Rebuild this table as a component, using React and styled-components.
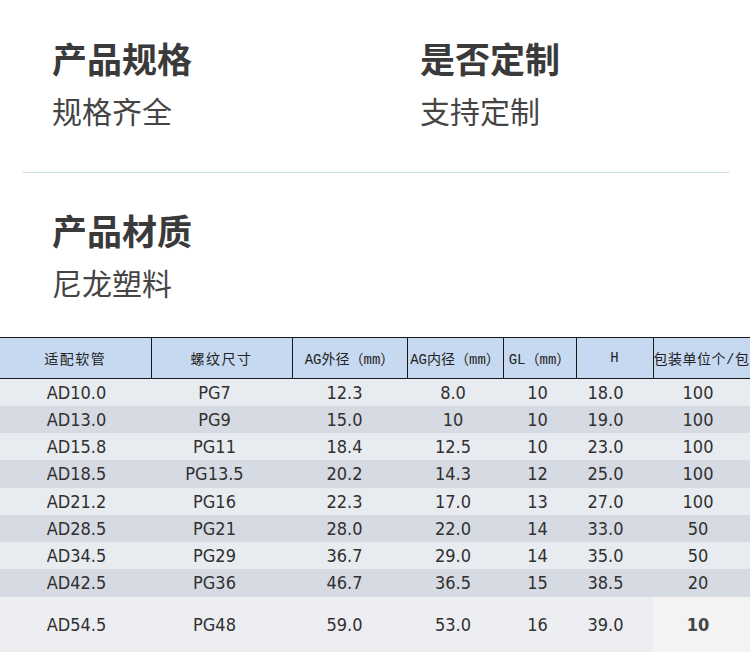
import styled, { createGlobalStyle } from "styled-components";

const GlobalStyle = createGlobalStyle`
  html, body {
    margin: 0;
    padding: 0;
    background: #fff;
    overflow: hidden;
  }
  body {
    font-family: "Noto Sans CJK SC", "Noto Sans", sans-serif;
  }
`;

const columns = [151, 141, 115, 96, 73, 77, 110];
const shifts = [-1, 7, 5, 2, 2, 9, 10];

const headers = [
    { text: "适配软管", spaced: true },
    { text: "螺纹尺寸", spaced: true },
    { text: "AG外径（mm）" },
    { text: "AG内径（mm）" },
    { text: "GL（mm）" },
    { text: "H" },
    { text: "包装单位个/包", last: true },
];

const rows = [
    ["AD10.0", "PG7", "12.3", "8.0", "10", "18.0", "100"],
    ["AD13.0", "PG9", "15.0", "10", "10", "19.0", "100"],
    ["AD15.8", "PG11", "18.4", "12.5", "10", "23.0", "100"],
    ["AD18.5", "PG13.5", "20.2", "14.3", "12", "25.0", "100"],
    ["AD21.2", "PG16", "22.3", "17.0", "13", "27.0", "100"],
    ["AD28.5", "PG21", "28.0", "22.0", "14", "33.0", "50"],
    ["AD34.5", "PG29", "36.7", "29.0", "14", "35.0", "50"],
    ["AD42.5", "PG36", "46.7", "36.5", "15", "38.5", "20"],
    ["AD54.5", "PG48", "59.0", "53.0", "16", "39.0", "10"],
];

export default function App() {
    return (
        <Page>
            <GlobalStyle />
            <SpecGrid>
                <Spec>
                    <SpecTitle>产品规格</SpecTitle>
                    <SpecValue>规格齐全</SpecValue>
                </Spec>
                <Spec>
                    <SpecTitle>是否定制</SpecTitle>
                    <SpecValue>支持定制</SpecValue>
                </Spec>
            </SpecGrid>
            <Divider />
            <SpecGrid $second>
                <Spec>
                    <SpecTitle>产品材质</SpecTitle>
                    <SpecValue>尼龙塑料</SpecValue>
                </Spec>
            </SpecGrid>

            <TableWrap>
                <Table>
                    <colgroup>
                        {columns.map((w, i) => <col key={i} style={{ width: w }} />)}
                    </colgroup>
                    <thead>
                        <tr>
                            {headers.map((h, i) => (
                                <HeadCell key={i} $last={h.last} $spaced={h.spaced}>{h.text}</HeadCell>
                            ))}
                        </tr>
                    </thead>
                    <tbody>
                        {rows.map((r, ri) => {
                            const isLast = ri === rows.length - 1;
                            return (
                                <Row key={ri} $dark={ri % 2 === 1} $tall={isLast}>
                                    {r.map((v, ci) => (
                                        <Cell
                                            key={ci}
                                            $shift={shifts[ci]}
                                            $soft={isLast && ci === r.length - 1}
                                        >
                                            {v}
                                        </Cell>
                                    ))}
                                </Row>
                            );
                        })}
                    </tbody>
                </Table>
            </TableWrap>
        </Page>
    );
}

const Page = styled.div`
    width: 750px;
    height: 654px;
    overflow: hidden;
    background: #fff;
    padding-top: 36px;
    box-sizing: border-box;
`;

const SpecGrid = styled.div`
    display: grid;
    grid-template-columns: 368px auto;
    padding-left: 52px;
    margin-top: ${p => p.$second ? '35px' : '0'};
`;

const Spec = styled.div`
    display: flex;
    flex-direction: column;
    gap: 11px;
`;

const SpecTitle = styled.div`
    font-size: 35px;
    line-height: 44px;
    font-weight: 700;
    color: #3a3a3a;
`;

const SpecValue = styled.div`
    font-size: 30px;
    line-height: 38px;
    color: #454545;
`;

const Divider = styled.div`
    height: 1px;
    background: #cfe4e4;
    margin: 43px 20px 0 22px;
`;

const TableWrap = styled.div`
    margin-top: 36px;
    width: 750px;
    overflow: hidden;
`;

const Table = styled.table`
    border-collapse: collapse;
    table-layout: fixed;
    width: 763px;
`;

const HeadCell = styled.th`
    height: 40px;
    padding: 0;
    background: #c6d9f0;
    border: 1px solid #1a1a1a;
    font-family: "Liberation Mono", "Noto Sans CJK SC", monospace;
    font-size: 14px;
    font-weight: 400;
    letter-spacing: ${p => p.$spaced ? '1.5px' : p.$last ? '0.5px' : '0'};
    color: #222;
    white-space: nowrap;
    overflow: hidden;
    text-align: ${p => p.$last ? 'left' : 'center'};
    &:first-child {
        border-left: none;
    }
`;

const Row = styled.tr`
    height: ${p => p.$tall ? '55px' : '27.25px'};
    background: ${p => p.$tall ? '#eceef2' : p.$dark ? '#d6dae2' : '#e8ebf0'};
`;

const Cell = styled.td`
    padding: 0 ${p => p.$shift > 0 ? p.$shift * 2 : 0}px 0 ${p => p.$shift < 0 ? -p.$shift * 2 : 0}px;
    text-align: center;
    font-family: "DejaVu Sans Condensed", "DejaVu Sans", sans-serif;
    font-stretch: condensed;
    font-size: 18px;
    color: #303030;
    white-space: nowrap;
    background: ${p => p.$soft ? '#f3f3f3' : 'transparent'};
    font-weight: ${p => p.$soft ? 700 : 400};
    ${p => p.$soft && 'color: #454545;'}
`;
